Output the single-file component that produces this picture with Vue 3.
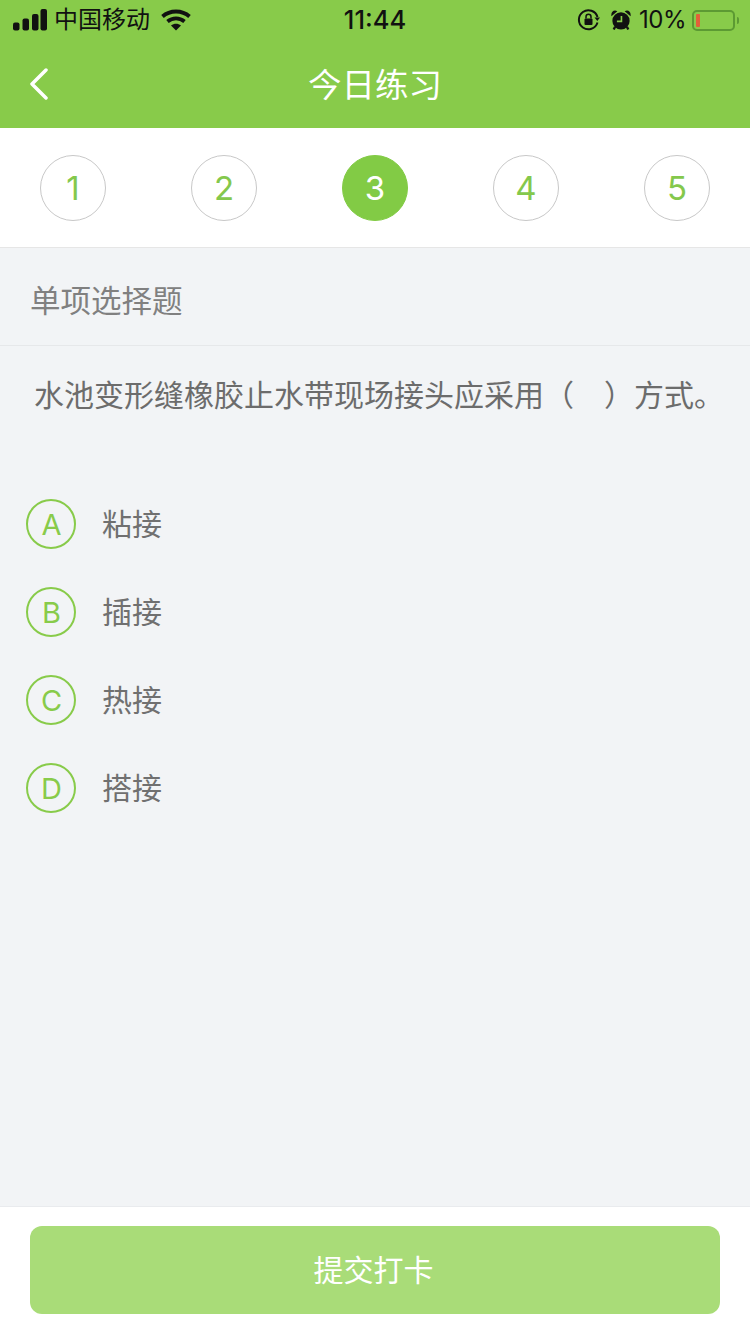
<script setup>
const steps = [1, 2, 3, 4, 5]
const options = [
  { key: 'A', text: '粘接' },
  { key: 'B', text: '插接' },
  { key: 'C', text: '热接' },
  { key: 'D', text: '搭接' },
]
</script>

<template>
  <div class="page">
    <header class="head">
      <div class="status">
        <div class="status-left">
          <svg width="35" height="22" viewBox="0 0 35 22" fill="#111">
            <rect x="0" y="13.500" width="6.500" height="8" rx="2" />
            <rect x="9.500" y="9.500" width="6.500" height="12" rx="2" />
            <rect x="19" y="5" width="6.500" height="16.500" rx="2" />
            <rect x="27.500" y="0" width="6.500" height="21.500" rx="2" />
          </svg>
          <span class="carrier">中国移动</span>
          <svg class="wifi" width="30" height="22" viewBox="0 0 30 22" fill="none" stroke="#111" stroke-width="3.800">
            <path d="M1.500 7.500C9 .8 21 .8 28.500 7.500" />
            <path d="M6.500 12.500C11.500 8.300 18.500 8.300 23.500 12.500" />
            <path d="M10 16.500 15 21.500 20 16.500C17 14 13 14 10 16.500Z" fill="#111" stroke="none" />
          </svg>
        </div>
        <span class="time">11:44</span>
        <div class="status-right">
          <svg width="24" height="24" viewBox="0 0 24 24" fill="none" stroke="#111" stroke-width="2">
            <path d="M20.500 14.500A9.500 9.500 0 1 1 20.500 9" />
            <path d="M17.500 9.500H23L20.300 13Z" fill="#111" stroke="none" />
            <rect x="7.500" y="10.500" width="8" height="6.500" rx="1" fill="#111" stroke="none" />
            <path d="M9 10.500V8.800a2.500 2.500 0 0 1 5 0v1.700" stroke-width="1.500" />
          </svg>
          <svg class="alarm" width="20" height="22" viewBox="0 0 22 22" fill="#111">
            <circle cx="11" cy="12" r="9.500" />
            <path d="M.5 7 7 1.500C3.500-.8-.5 2 .5 7ZM21.500 7 15 1.500C18.500-.8 22.500 2 21.500 7Z" />
            <path d="M4.500 18.500 3 21.500M17.500 18.500 19 21.500" stroke="#111" stroke-width="2.600" />
            <path d="M11.500 6.500V12.500H6.500" fill="none" stroke="#88cb4a" stroke-width="1.800" />
          </svg>
          <span class="percent">10%</span>
          <div class="battery">
            <div class="battery-level"></div>
          </div>
          <div class="battery-tip"></div>
        </div>
      </div>
      <div class="nav">
        <svg class="back" width="20" height="32" viewBox="0 0 20 32" fill="none" stroke="#fff" stroke-width="3.500" stroke-linecap="round" stroke-linejoin="round">
          <path d="M17 2 3 16 17 30" />
        </svg>
        <span class="title">今日练习</span>
      </div>
    </header>

    <div class="steps">
      <div v-for="n in steps" :key="n" class="step" :class="{ active: n === 3 }">{{ n }}</div>
    </div>

    <div class="type">单项选择题</div>

    <main class="body">
      <p class="question">水池变形缝橡胶止水带现场接头应采用（<span class="blank"></span>）方式。</p>
      <ul class="options">
        <li v-for="o in options" :key="o.key" class="option">
          <span class="letter">{{ o.key }}</span>
          <span class="option-text">{{ o.text }}</span>
        </li>
      </ul>
    </main>

    <footer class="foot">
      <button class="submit">提交打卡</button>
    </footer>
  </div>
</template>

<style>
html,
body {
  margin: 0;
  background: #f2f4f6;
}
</style>

<style scoped>
.page {
  width: 750px;
  height: 1334px;
  display: flex;
  flex-direction: column;
  background: #f2f4f6;
  font-family: "Inter", "Noto Sans CJK SC", sans-serif;
  overflow: hidden;
}

.head {
  height: 128px;
  background: #88cb4a;
  flex: none;
}

.status {
  height: 40px;
  padding: 0 11px 0 13px;
  display: flex;
  align-items: center;
  justify-content: space-between;
  position: relative;
  color: #111;
}

.status-left,
.status-right {
  display: flex;
  align-items: center;
}

.carrier {
  margin-left: 6px;
  font-size: 24px;
  line-height: 42px;
}

.wifi {
  margin-left: 11px;
}

.time {
  position: absolute;
  left: 0;
  right: 0;
  text-align: center;
  font-size: 25.500px;
  font-weight: 500;
  line-height: 42px;
}

.alarm {
  margin-left: 10px;
}

.percent {
  margin-left: 8px;
  font-size: 24px;
  letter-spacing: -0.5px;
  line-height: 42px;
}

.battery {
  margin-left: 6px;
  width: 43px;
  height: 21px;
  box-sizing: border-box;
  border: 2px solid #5c9a33;
  border-radius: 5px;
  padding: 2px;
}

.battery-level {
  width: 4px;
  height: 100%;
  background: #e2603a;
  border-radius: 1px;
}

.battery-tip {
  width: 2px;
  height: 7px;
  margin-left: 2px;
  background: #5c9a33;
  border-radius: 0 2px 2px 0;
}

.nav {
  height: 88px;
  position: relative;
  display: flex;
  align-items: center;
  justify-content: center;
  padding-bottom: 4px;
  box-sizing: border-box;
}

.back {
  position: absolute;
  left: 29px;
  top: 28px;
}

.title {
  color: #fff;
  font-size: 33.500px;
}

.steps {
  flex: none;
  height: 120px;
  box-sizing: border-box;
  padding: 27px 40px 0;
  background: #fff;
  border-bottom: 1px solid #e6e6e6;
  display: flex;
  justify-content: space-between;
}

.step {
  width: 66px;
  height: 66px;
  box-sizing: border-box;
  border: 1px solid #c8c8c8;
  border-radius: 50%;
  display: flex;
  align-items: center;
  justify-content: center;
  color: #84c84c;
  font-size: 33px;
}

.step.active {
  border-color: #82cb45;
  background: #82cb45;
  color: #fff;
}

.type {
  flex: none;
  height: 98px;
  box-sizing: border-box;
  padding: 4px 0 0 30px;
  border-bottom: 1px solid #e6e8ea;
  display: flex;
  align-items: center;
  color: #808080;
  font-size: 30.500px;
}

.body {
  flex: 1;
}

.question {
  margin: 0;
  padding: 27px 0 0 34px;
  color: #6c6c6c;
  font-size: 30px;
  line-height: 44px;
  white-space: nowrap;
}

.blank {
  display: inline-block;
  width: 30px;
}

.options {
  list-style: none;
  margin: 82px 0 0;
  padding: 0 0 0 26px;
  display: flex;
  flex-direction: column;
  gap: 38px;
}

.option {
  display: flex;
  align-items: center;
  height: 50px;
}

.letter {
  width: 50px;
  height: 50px;
  box-sizing: border-box;
  border: 2px solid #88cb4a;
  border-radius: 50%;
  padding: 1px 0 0 1px;
  display: flex;
  align-items: center;
  justify-content: center;
  color: #88cb4a;
  font-size: 29px;
}

.option-text {
  margin-left: 26px;
  padding-bottom: 4px;
  color: #707070;
  font-size: 30px;
}

.foot {
  flex: none;
  height: 128px;
  box-sizing: border-box;
  padding: 19px 30px 0;
  background: #fff;
  border-top: 1px solid #e9ebee;
}

.submit {
  display: block;
  width: 100%;
  height: 88px;
  border: none;
  border-radius: 12px;
  background: #a9dc78;
  color: #fff;
  font-family: inherit;
  font-size: 30px;
  padding: 0 3px 5px 0;
}
</style>
